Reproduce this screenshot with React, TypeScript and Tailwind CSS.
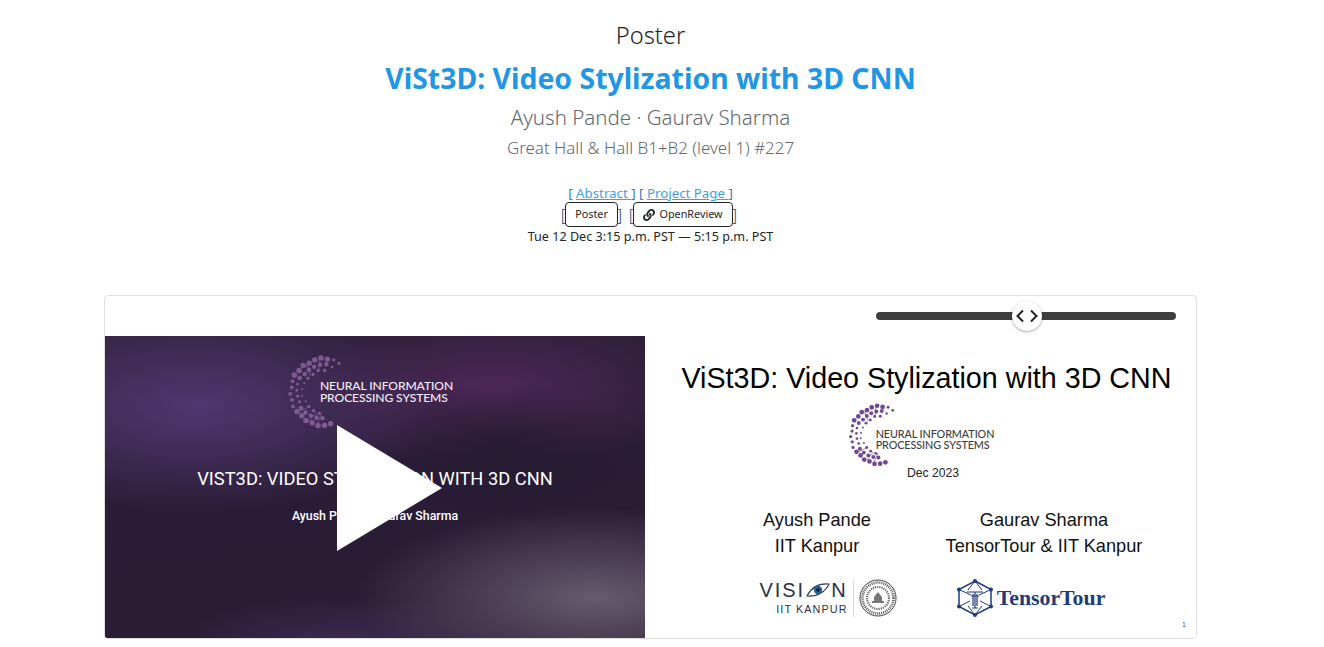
import React from 'react';
import { FaLink } from 'react-icons/fa';

// dots of the NeurIPS ring, in a 76x78 box, running from upper right round the left to the bottom
const ringDots = (() => {
  const dots: { x: number; y: number; r: number }[] = [];
  const rows = [
    { radius: 36, step: 11, from: -62, to: -282, size: 2.9 },
    { radius: 29.5, step: 13, from: -68, to: -276, size: 2.4 },
    { radius: 23.5, step: 17, from: -80, to: -268, size: 1.8 },
  ];
  rows.forEach((row, i) => {
    for (let a = row.from - i * 4; a >= row.to; a -= row.step) {
      const rad = (a * Math.PI) / 180;
      const wobble = ((Math.round(-a) * 7) % 5) * 0.45;
      const leftSide = a < -155 && a > -215 ? 0.68 : 1;
      const topEnd = a > -80 ? 0.6 : 1;
      dots.push({
        x: 40 + Math.cos(rad) * (row.radius - wobble),
        y: 39 + Math.sin(rad) * (row.radius - wobble),
        r: row.size * leftSide * topEnd,
      });
    }
  });
  return dots;
})();

// little twigs between the rows
const ringTwigs = [-105, -130, -225, -250, -265].map((deg) => {
  const rad = (deg * Math.PI) / 180;
  return {
    x1: 40 + Math.cos(rad) * 22,
    y1: 39 + Math.sin(rad) * 22,
    x2: 40 + Math.cos(rad + 0.12) * 34,
    y2: 39 + Math.sin(rad + 0.12) * 34,
  };
});

const NeuripsLogo = ({
  fill,
  width,
  height,
  textClass,
}: {
  fill: string;
  width: number;
  height: number;
  textClass: string;
}) => (
  <div className="flex items-center">
    <svg width={width} height={height} viewBox="0 0 76 78" className="shrink-0">
      {ringTwigs.map((t, i) => (
        <line key={i} {...t} stroke={fill} strokeWidth="0.8" />
      ))}
      {ringDots.map((d, i) => (
        <circle key={i} cx={d.x} cy={d.y} r={d.r} fill={fill} />
      ))}
    </svg>
    <div className={`font-['Lato',sans-serif] font-medium tracking-[-0.1px] ${textClass}`}>
      <div>NEURAL INFORMATION</div>
      <div>PROCESSING SYSTEMS</div>
    </div>
  </div>
);

const Eye = () => (
  <svg width="24" height="14" viewBox="0 0 24 14" className="mx-[1px]">
    <path d="M1 13 C5 5 12 0 23 1 C20 8 12 14 1 13Z" fill="none" stroke="#33415f" strokeWidth="1.1" />
    <circle cx="12" cy="7" r="4.2" fill="#2c5f96" />
    <circle cx="12" cy="7" r="1.8" fill="#0e1c33" />
  </svg>
);

const Seal = () => (
  <svg width="38" height="38" viewBox="0 0 38 38">
    <circle cx="19" cy="19" r="18" fill="none" stroke="#444" strokeWidth="1" />
    <circle cx="19" cy="19" r="15.5" fill="none" stroke="#555" strokeWidth="2.6" strokeDasharray="1 1" />
    <circle cx="19" cy="19" r="11" fill="none" stroke="#666" strokeWidth="2.2" strokeDasharray="1.2 1" />
    <path d="M13 24 H25 V22 H23 V18 L19 13 L15 18 V22 H13Z" fill="#777" />
  </svg>
);

const TensorIcon = () => (
  <svg width="38" height="38" viewBox="0 0 36 38" fill="none" stroke="#1f3b78" strokeWidth="1.5">
    <path d="M18 2 L34 10.5 V27.5 L18 36 L2 27.5 V10.5Z" />
    <path d="M2 10.5 L14 16 M34 10.5 L22 16 M2 27.5 L13 22 M34 27.5 L23 22 M18 2 L11 11 M18 2 L25 11 M18 36 L11 27 M18 36 L25 27" strokeWidth="1" />
    <path d="M10 13 H26 M14 17 H22 M18 13 V29 M15 29 H21 M16 15 V27 M20 15 V27" strokeWidth="1.2" />
    {[[18, 2], [34, 10.5], [34, 27.5], [18, 36], [2, 27.5], [2, 10.5]].map(([x, y]) => (
      <circle key={`${x}-${y}`} cx={x} cy={y} r="2" fill="#1f3b78" stroke="none" />
    ))}
  </svg>
);

const Slider = () => (
  <div className="h-10 flex items-center justify-end pr-5">
    <div className="relative w-[300px] h-2 rounded-full bg-[#3f3f3f]">
      <div className="absolute left-[136px] -top-[11px] w-[30px] h-[30px] rounded-full bg-white shadow-[0_1px_3px_rgba(0,0,0,0.35)] flex items-center justify-center">
        <svg width="24" height="14" viewBox="0 0 24 14" fill="none" stroke="#222" strokeWidth="2">
          <path d="M8 1.5 L2.5 7 L8 12.5 M16 1.5 L21.5 7 L16 12.5" />
        </svg>
      </div>
    </div>
  </div>
);

const VideoPane = () => (
  <div className="relative w-[540px] h-[302px] overflow-hidden flex flex-col items-center text-white font-['Roboto',sans-serif] bg-[#2a1c36] bg-[radial-gradient(ellipse_130px_70px_at_400px_115px,rgba(38,26,50,0.9),transparent),radial-gradient(ellipse_250px_105px_at_90px_70px,rgba(82,56,114,0.95),transparent),radial-gradient(ellipse_200px_75px_at_390px_55px,rgba(88,42,98,0.8),transparent),radial-gradient(ellipse_240px_90px_at_490px_262px,rgba(106,94,114,0.95),transparent),radial-gradient(ellipse_170px_45px_at_240px_305px,rgba(74,54,100,0.55),transparent),linear-gradient(170deg,#30213c_0%,#2a1c36_55%,#2a1c33_100%)]">
    <div className="mt-[16px] -ml-[11px]">
      <NeuripsLogo fill="#7e5a93" width={72} height={80} textClass="-ml-[38px] text-[12.1px] leading-[12px] text-[#f2eef4] -mt-[1px]" />
    </div>
    <div className="mt-[35px] text-[18.3px] leading-[24px] whitespace-nowrap">
      VIST3D: VIDEO STYLIZATION WITH 3D CNN
    </div>
    <div className="mt-[17px] text-[12.35px] leading-[16px] font-medium whitespace-nowrap">Ayush Pande · Gaurav Sharma</div>
    <svg className="absolute left-[232px] top-[89px]" width="105" height="126" viewBox="0 0 105 126">
      <polygon points="0,0 105,63 0,126" fill="#fff" />
    </svg>
  </div>
);

const SlidePane = () => (
  <div className="relative w-[551px] h-[302px] bg-white text-black font-['Liberation_Sans',sans-serif] flex flex-col">
    <div className="pl-3 mt-[24px] text-center text-[28.7px] leading-[36px] whitespace-nowrap">
      ViSt3D: Video Stylization with 3D CNN
    </div>
    <div className="mt-[6px] h-[66px] flex justify-center items-center">
      <NeuripsLogo fill="#6f4a93" width={62} height={68} textClass="-ml-[33px] text-[10.8px] leading-[11.5px] text-[#3d3d3d] mt-[8px]" />
    </div>
    <div className="-mt-[3px] pl-[25px] text-center text-[12.2px] leading-[16px] text-[#222]">Dec 2023</div>
    <div className="mt-[26px] pl-[60px] grid grid-cols-[224px_230px] text-center text-[18.2px] leading-[26px] text-[#111]">
      <div>
        <div>Ayush Pande</div>
        <div>IIT Kanpur</div>
      </div>
      <div>
        <div>Gaurav Sharma</div>
        <div>TensorTour &amp; IIT Kanpur</div>
      </div>
      <div className="mt-[18px] ml-[22px] h-[42px] flex justify-center items-center">
        <div className="text-right text-[#26324d] pr-[5px] mr-[5px] border-r border-[#ddd]">
          <div className="flex items-center justify-end text-[20px] leading-[22px] tracking-[2px]">
            VISI<Eye />N
          </div>
          <div className="text-[10.8px] leading-[16px] tracking-[1.1px]">IIT KANPUR</div>
        </div>
        <Seal />
      </div>
      <div className="mt-[18px] -ml-[27px] h-[42px] flex justify-center items-center gap-[3px] text-[#1f3b78]">
        <TensorIcon />
        <span className="font-['Liberation_Serif',serif] font-bold text-[21.8px] leading-[28px]">TensorTour</span>
      </div>
    </div>
    <div className="absolute right-[10px] bottom-[8px] text-[7px] leading-[10px] text-[#555]">1</div>
  </div>
);

const Bracket = ({ children }: { children: string }) => (
  <span className="w-[3px] flex justify-center text-[17px] font-light text-[#33566e]">{children}</span>
);

export default function App() {
  return (
    <div className="w-[1301px] min-h-[647px] bg-white overflow-hidden font-['Noto_Sans',sans-serif] text-[#212529]">
      <div className="pt-5 text-center">
        <div className="text-[23.7px] leading-[30px] font-light">Poster</div>
        <h1 className="mt-[10px] text-[28.4px] leading-[36px] font-bold text-[#2196e3]">ViSt3D: Video Stylization with 3D CNN</h1>
        <div className="mt-[7px] text-[20.5px] leading-[28px] font-light text-[#5f6870]">Ayush Pande · Gaurav Sharma</div>
        <div className="mt-[5px] text-[16.9px] leading-[24px] font-light text-[#5f6870]">Great Hall &amp; Hall B1+B2 (level 1) #227</div>
        <div className="mt-[24px] text-[13.3px] leading-[19px] text-[#3a7ca8]">
          [ <a className="underline text-[#3f9fe6]" href="#">Abstract </a> ] [ <a className="underline text-[#3f9fe6]" href="#">Project Page </a> ]
        </div>
        <div className="h-[25px] -mt-[1px] mr-[3px] flex items-center justify-center text-[10.8px] text-[#212529]">
          <Bracket>[</Bracket>
          <span className="h-[25px] w-[53px] flex items-center justify-center border border-[#212529] rounded-[4px] bg-white">Poster</span>
          <Bracket>]</Bracket>
          <span className="ml-[9px]" />
          <Bracket>[</Bracket>
          <span className="h-[25px] w-[100px] flex items-center justify-center gap-[4px] border border-[#212529] rounded-[4px] bg-white">
            <FaLink className="text-[12px]" />OpenReview
          </span>
          <Bracket>]</Bracket>
        </div>
        <div className="mt-[1px] text-[12.6px] leading-[18px] text-[#212529]">Tue 12 Dec 3:15 p.m. PST — 5:15 p.m. PST</div>
      </div>
      <div className="mt-[49px] ml-[104px] w-[1093px] border border-[#dfdfdf] rounded-[4px] overflow-hidden bg-white">
        <Slider />
        <div className="flex">
          <VideoPane />
          <SlidePane />
        </div>
      </div>
    </div>
  );
}
